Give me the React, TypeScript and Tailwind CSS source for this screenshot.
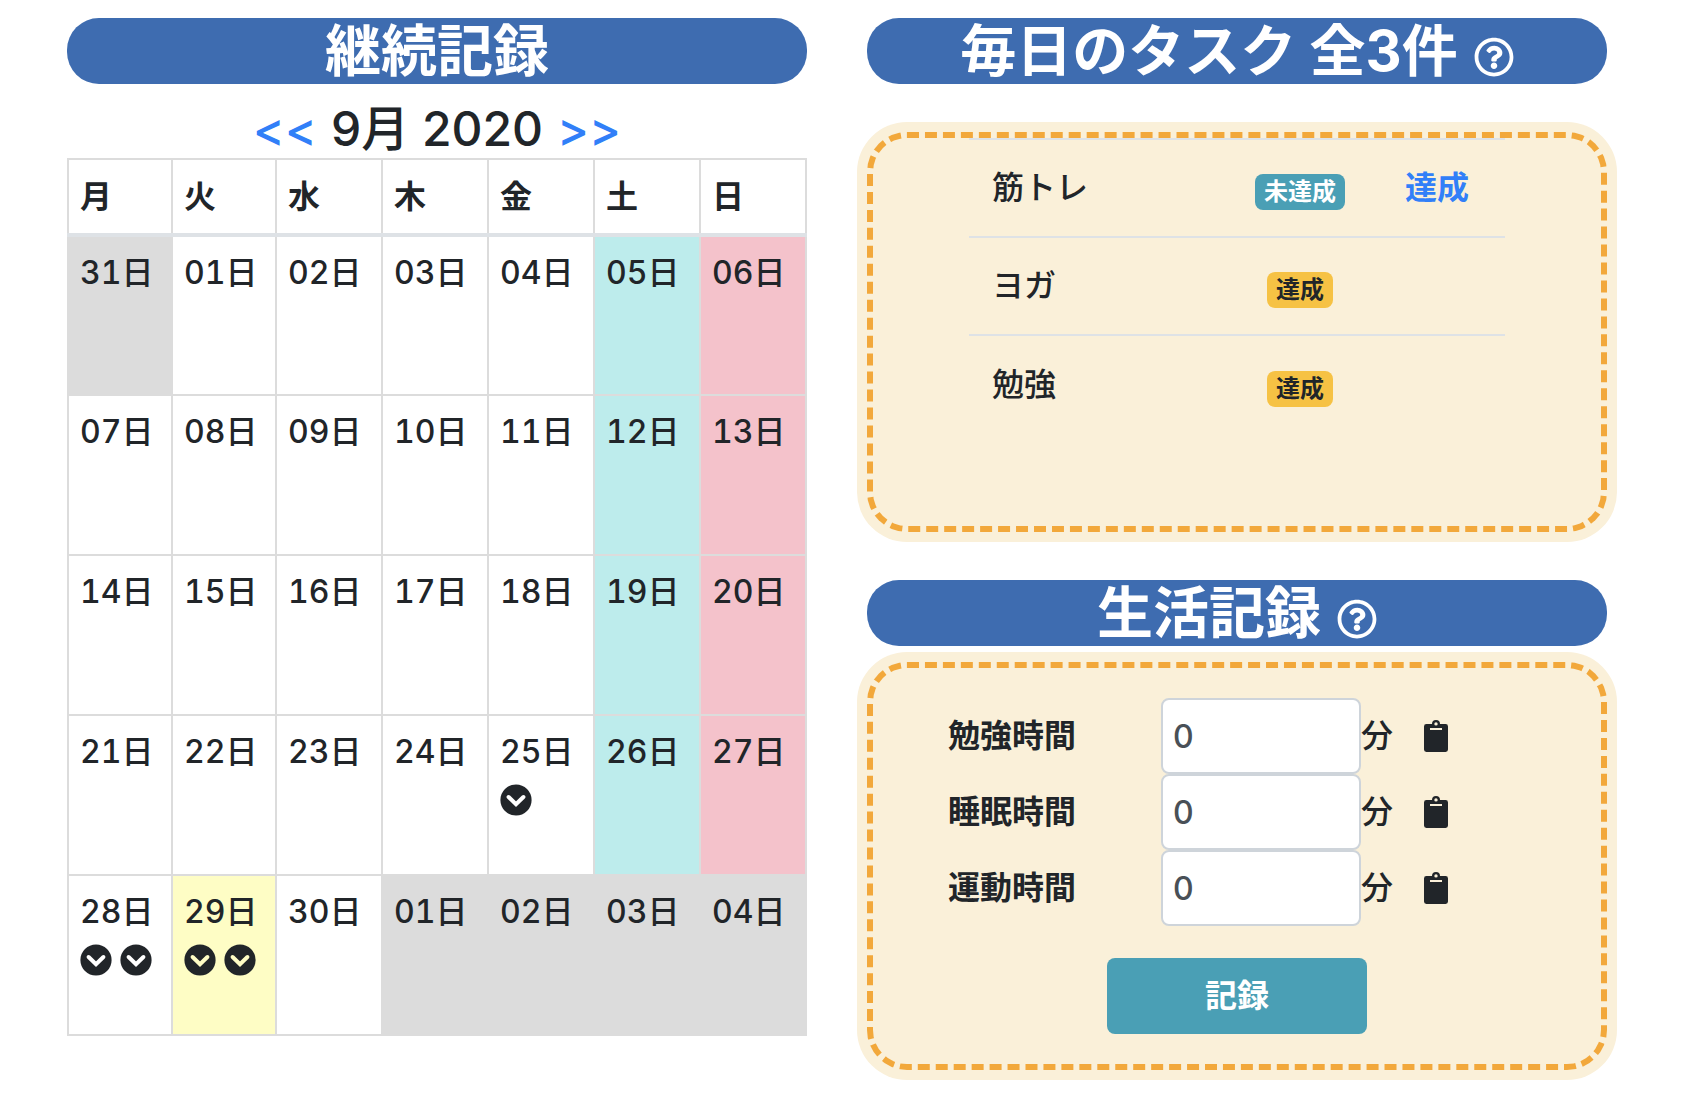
import { useId } from "react";
import type { ReactNode } from "react";
import { FaRegQuestionCircle } from "react-icons/fa";

type Tone = "plain" | "other" | "sat" | "sun" | "today";
type Day = { label: string; tone: Tone; marks: number };

const weekdays = ["月", "火", "水", "木", "金", "土", "日"];

const tones: Record<Tone, string> = {
  plain: "bg-white",
  other: "bg-[#dcdcdc]",
  sat: "bg-[#bdecec]",
  sun: "bg-[#f4c2cb]",
  today: "bg-[#fefdc5]",
};

const marksByDay: Record<number, number> = { 25: 1, 28: 2, 29: 2 };

const weeks: Day[][] = Array.from({ length: 5 }, (_, w) =>
  Array.from({ length: 7 }, (_, d) => {
    const n = w * 7 + d;
    const inMonth = n >= 1 && n <= 30;
    const date = n === 0 ? 31 : n > 30 ? n - 30 : n;
    let tone: Tone = "plain";
    if (!inMonth) tone = "other";
    else if (n === 29) tone = "today";
    else if (d === 5) tone = "sat";
    else if (d === 6) tone = "sun";
    return {
      label: `${String(date).padStart(2, "0")}日`,
      tone,
      marks: inMonth ? (marksByDay[n] ?? 0) : 0,
    };
  }),
);

const tasks = [
  { name: "筋トレ", done: false },
  { name: "ヨガ", done: true },
  { name: "勉強", done: true },
];

const records = [
  { id: "study", label: "勉強時間" },
  { id: "sleep", label: "睡眠時間" },
  { id: "exercise", label: "運動時間" },
];

function CheckMark() {
  const maskId = useId();
  return (
    <svg viewBox="0 0 32 32" className="size-8" aria-hidden="true">
      <mask id={maskId}>
        <rect width="32" height="32" fill="white" />
        <path
          d="M8.600 13 16 20.200 23.400 13"
          fill="none"
          stroke="black"
          strokeWidth="4"
          strokeLinecap="round"
          strokeLinejoin="miter"
        />
      </mask>
      <circle cx="16" cy="16" r="15.6" fill="currentColor" mask={`url(#${maskId})`} />
    </svg>
  );
}

function Clipboard() {
  return (
    <svg viewBox="0 0 24 32" className="h-8 w-6" fill="currentColor" fillRule="evenodd" aria-hidden="true">
      <path d="M2.400 4H8a4 4 0 0 1 8 0h5.600A2.400 2.400 0 0 1 24 6.400v23.200A2.400 2.400 0 0 1 21.600 32H2.400A2.400 2.400 0 0 1 0 29.600V6.400A2.400 2.400 0 0 1 2.400 4ZM12 2.200a1.700 1.700 0 1 0 0 3.400 1.700 1.700 0 0 0 0-3.400ZM6 8v2h12V8Z" />
    </svg>
  );
}

function Banner({ children, help }: { children: ReactNode; help?: boolean }) {
  return (
    <h2 className="flex h-[66px] items-center justify-center gap-4 rounded-[32px] bg-[#3e6cb0] text-[56px] leading-[66px] font-bold text-white">
      <span>{children}</span>
      {help && (
        <button type="button" aria-label="ヘルプ" className="mt-3 text-[40px]">
          <FaRegQuestionCircle />
        </button>
      )}
    </h2>
  );
}

function Panel({ className, children }: { className: string; children: ReactNode }) {
  return (
    <div
      className={`rounded-[40px] border-[6px] border-dashed border-[#f2a83b] bg-[#faf0d9] shadow-[0_0_0_10px_#faf0d9] ${className}`}
    >
      {children}
    </div>
  );
}

function Calendar() {
  return (
    <section>
      <Banner>継続記録</Banner>
      <div className="mt-4 flex h-[58px] items-center justify-center gap-[14px] text-5xl">
        <a href="#prev" className="text-[#317ff8]">&lt;&lt;</a>
        <span>9月 2020</span>
        <a href="#next" className="text-[#317ff8]">&gt;&gt;</a>
      </div>
      <table className="w-full table-fixed border-collapse tabular-nums">
        <colgroup>
          <col className="w-[104px]" />
          <col className="w-[104px]" />
          <col />
          <col />
          <col />
          <col />
          <col />
        </colgroup>
        <thead>
          <tr>
            {weekdays.map((d) => (
              <th
                key={d}
                scope="col"
                className="h-[76px] border-2 border-b-4 border-[#dcdcdc] border-b-[#dee2e6] px-[11px] text-left font-bold"
              >
                {d}
              </th>
            ))}
          </tr>
        </thead>
        <tbody>
          {weeks.map((week, i) => (
            <tr key={i}>
              {week.map((day, j) => (
                <td key={j} className={`h-40 border-2 border-[#dcdcdc] px-[11px] py-3 align-top ${tones[day.tone]}`}>
                  {day.label}
                  {day.marks > 0 && (
                    <div className="flex h-12 items-center gap-2">
                      {Array.from({ length: day.marks }, (_, k) => (
                        <CheckMark key={k} />
                      ))}
                    </div>
                  )}
                </td>
              ))}
            </tr>
          ))}
        </tbody>
      </table>
    </section>
  );
}

function Tasks() {
  return (
    <section>
      <Banner help>毎日のタスク 全3件</Banner>
      <Panel className="mt-12 h-[400px] px-24">
        <table className="w-full table-fixed border-collapse">
          <colgroup>
            <col />
            <col className="w-[138px]" />
            <col className="w-[136px]" />
          </colgroup>
          <tbody>
            {tasks.map((t) => (
              <tr key={t.name} className="h-[98px] border-t-2 border-[#dee2e6]">
                <td className="pl-[23px]">{t.name}</td>
                <td className="pt-1 text-center">
                  <span
                    className={`inline-block rounded-lg px-[9px] text-2xl leading-9 font-bold align-middle ${
                      t.done ? "bg-[#f6c244]" : "bg-[#4a9fb5] text-white"
                    }`}
                  >
                    {t.done ? "達成" : "未達成"}
                  </span>
                </td>
                <td className="text-center">
                  {!t.done && <a href="#done" className="font-bold text-[#317ff8]">達成</a>}
                </td>
              </tr>
            ))}
          </tbody>
        </table>
      </Panel>
    </section>
  );
}

function LifeRecord() {
  return (
    <section className="mt-12">
      <Banner help>生活記録</Banner>
      <Panel className="mt-4 h-[408px] px-[75px] pt-[30px]">
        <form>
          {records.map((r) => (
            <div key={r.id} className="flex items-center">
              <label htmlFor={r.id} className="w-[213px] shrink-0 font-bold">{r.label}</label>
              <input
                id={r.id}
                defaultValue="0"
                className="h-[76px] w-[200px] rounded-lg border-2 border-[#ced4da] bg-white px-[10px] text-[#495057]"
              />
              <span>分</span>
              <button type="button" aria-label={`${r.label}のメモ`} className="ml-[31px]">
                <Clipboard />
              </button>
            </div>
          ))}
          <div className="mt-8 flex justify-center">
            <button type="submit" className="h-[76px] w-[260px] rounded-lg bg-[#4a9fb5] font-bold text-white">
              記録
            </button>
          </div>
        </form>
      </Panel>
    </section>
  );
}

export default function App() {
  return (
    <main className="grid grid-cols-2 gap-[60px] bg-white pt-[18px] pr-20 pb-6 pl-[67px] font-['Inter','Noto_Sans_CJK_JP',sans-serif] text-[32px] leading-[48px] font-medium text-[#212529]">
      <Calendar />
      <div>
        <Tasks />
        <LifeRecord />
      </div>
    </main>
  );
}
